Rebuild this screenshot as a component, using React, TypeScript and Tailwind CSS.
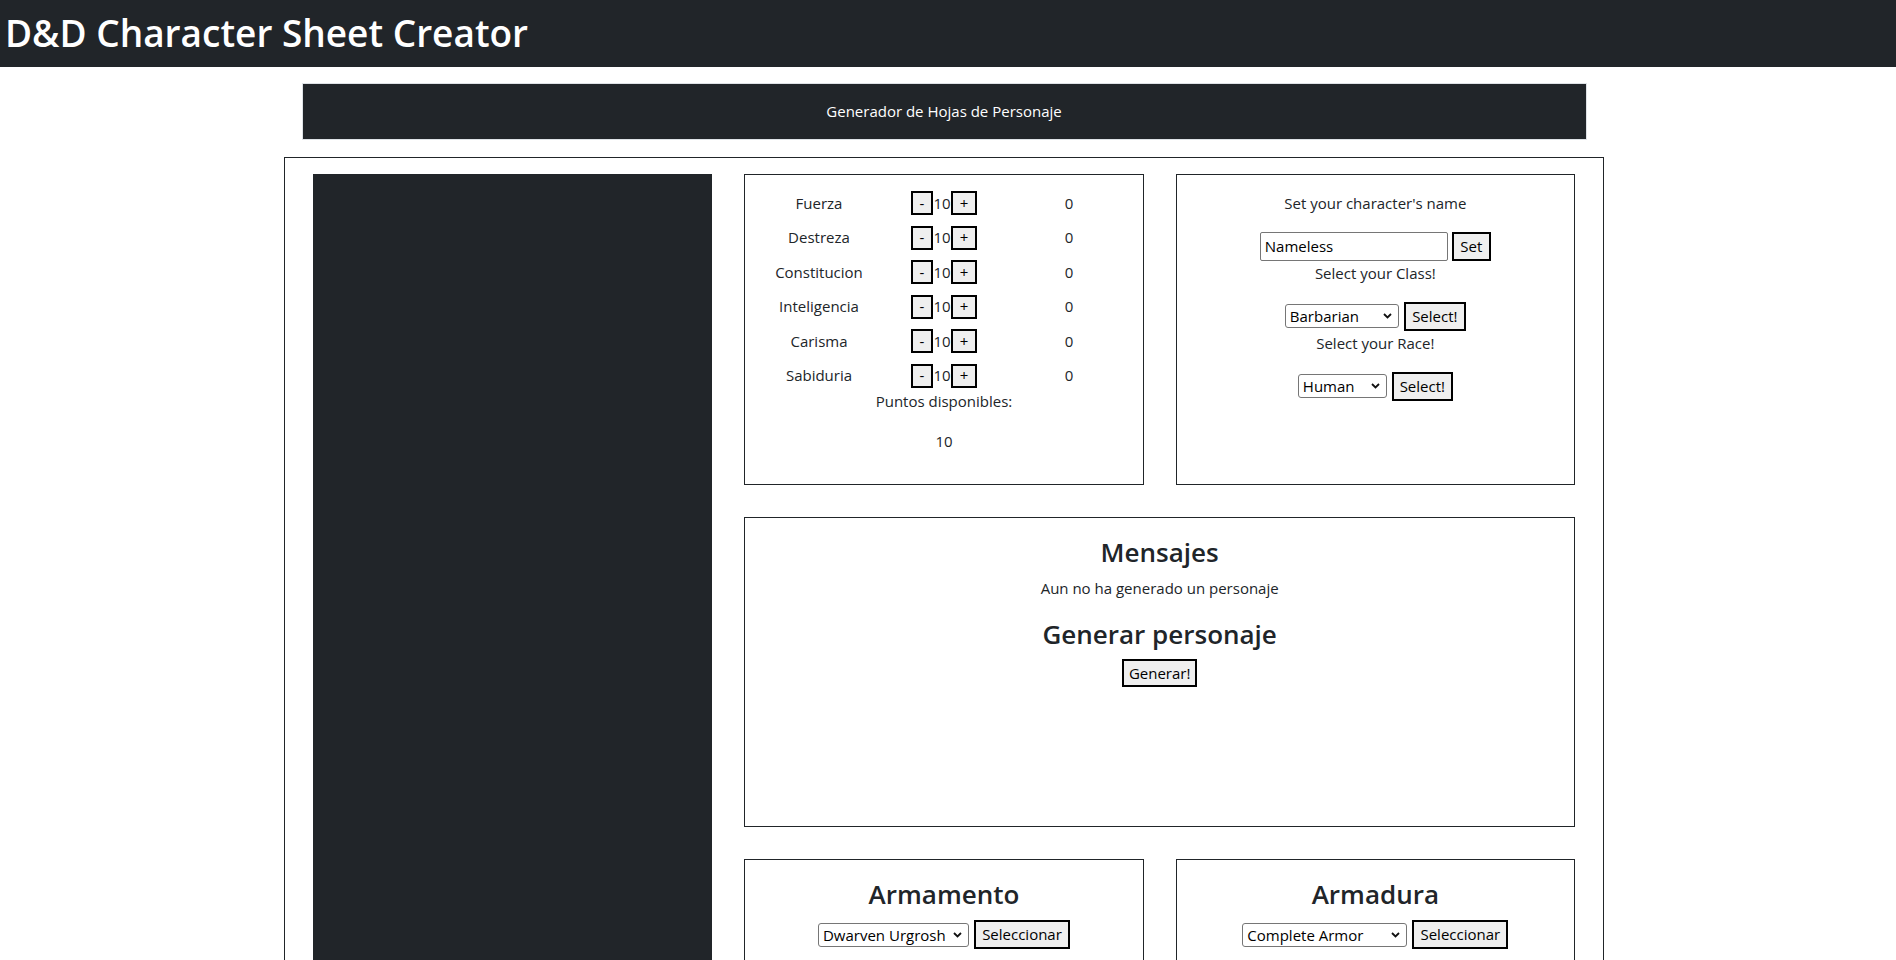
import React, { useState } from "react";

const stats = [
  "Fuerza",
  "Destreza",
  "Constitucion",
  "Inteligencia",
  "Carisma",
  "Sabiduria",
];

function Chevron() {
  return (
    <svg
      className="pointer-events-none absolute right-[7px] top-1/2 -translate-y-1/2"
      width="9"
      height="6"
      viewBox="0 0 9 6"
      fill="none"
    >
      <path d="M1 1l3.5 3.5L8 1" stroke="#111" strokeWidth="1.8" />
    </svg>
  );
}

function Select({ value, options, width }: { value: string; options: string[]; width: string }) {
  return (
    <div className={`relative h-[24px] ${width}`}>
      <select
        defaultValue={value}
        className="h-full w-full appearance-none rounded-[3px] border border-[#767676] bg-white pl-[4px] pr-5 text-[15px] leading-[22px] text-black"
      >
        {options.map((o) => (
          <option key={o}>{o}</option>
        ))}
      </select>
      <Chevron />
    </div>
  );
}

const btn =
  "border-2 border-black bg-[#efefef] text-black text-[15px] leading-none flex items-center justify-center";

function StatsBox() {
  const [values] = useState(stats.map(() => 10));
  return (
    <div className="border border-[#212529] pt-[13px] text-[15px]">
      <div className="mx-auto flex w-[375px] flex-col gap-[4.5px]">
        {stats.map((s, i) => (
          <div key={s} className="grid h-[30px] grid-cols-3 items-center text-center">
            <span>{s}</span>
            <div className="flex items-center justify-center">
              <button className={`${btn} h-[24px] w-[22px] text-[13px]`}>-</button>
              <span className="w-[18px] text-center">{values[i]}</span>
              <button className={`${btn} h-[24px] w-[26px] text-[13px]`}>+</button>
            </div>
            <span>0</span>
          </div>
        ))}
      </div>
      <p className="text-center leading-[20px]">Puntos disponibles:</p>
      <p className="mt-[20px] text-center leading-[20px]">10</p>
    </div>
  );
}

function NameBox() {
  return (
    <div className="flex flex-col items-center border border-[#212529] pt-4 text-[15px]">
      <p className="mb-4 leading-[24px]">Set your character's name</p>
      <div className="flex h-[30px] items-center gap-[4px]">
        <input
          defaultValue="Nameless"
          className="h-[29px] w-[188px] rounded-[2px] border border-[#767676] pl-[4px] text-[15px] text-black"
        />
        <button className={`${btn} h-[29px] w-[39px]`}>Set</button>
      </div>
      <p className="mb-4 leading-[24px]">Select your Class!</p>
      <div className="flex h-[30px] items-center gap-[5px]">
        <Select value="Barbarian" options={["Barbarian", "Bard", "Cleric", "Druid", "Fighter"]} width="w-[114px]" />
        <button className={`${btn} h-[29px] w-[62px]`}>Select!</button>
      </div>
      <p className="mb-4 leading-[24px]">Select your Race!</p>
      <div className="flex h-[30px] items-center gap-[5px]">
        <Select value="Human" options={["Human", "Elf", "Dwarf", "Halfling"]} width="w-[89px]" />
        <button className={`${btn} h-[29px] w-[61px]`}>Select!</button>
      </div>
    </div>
  );
}

function EquipBox({
  title,
  value,
  options,
  selectWidth,
}: {
  title: string;
  value: string;
  options: string[];
  selectWidth: string;
}) {
  return (
    <div className="flex flex-col items-center border border-[#212529] pt-[18px]">
      <h3 className="mb-2 text-[26px] font-semibold leading-[33.6px]">{title}</h3>
      <div className="flex h-[30px] items-center gap-[5px]">
        <Select value={value} options={options} width={selectWidth} />
        <button className={`${btn} h-[29px] w-[96px]`}>Seleccionar</button>
      </div>
    </div>
  );
}

export default function App() {
  return (
    <div className="min-h-screen bg-white font-['Open_Sans',sans-serif] text-[#212529]">
      <header className="flex h-[67px] items-center bg-[#212529] pl-[5px]">
        <h1 className="pb-[2px] text-[37px] font-semibold leading-none text-white">
          D&amp;D Character Sheet Creator
        </h1>
      </header>

      <div className="w-[1888px]">
        <div className="mx-auto mt-4 flex h-[57px] w-[1285px] items-center justify-center border border-[#dee2e6] bg-[#212529] text-[15px] text-white">
          Generador de Hojas de Personaje
        </div>

        <div className="mx-auto mt-[17px] grid w-[1320px] grid-cols-3 grid-rows-[311px_310px_310px] gap-8 border border-[#212529] px-[28px] pb-8 pt-4">
          {/* Left dark column */}
          <div className="row-span-3 bg-[#212529]" />

          <StatsBox />
          <NameBox />

          {/* Messages */}
          <div className="col-span-2 flex flex-col items-center border border-[#212529] pt-[18px] text-[15px]">
            <h3 className="mb-[6px] text-[26px] font-semibold leading-[33.6px]">Mensajes</h3>
            <p className="mb-[18px] leading-[24px]">Aun no ha generado un personaje</p>
            <h3 className="mb-2 text-[26px] font-semibold leading-[33.6px]">Generar personaje</h3>
            <button className={`${btn} h-[28px] w-[75px]`}>Generar!</button>
          </div>

          <EquipBox
            title="Armamento"
            value="Dwarven Urgrosh"
            options={["Dwarven Urgrosh", "Longsword", "Greataxe", "Dagger"]}
            selectWidth="w-[151px]"
          />
          <EquipBox
            title="Armadura"
            value="Complete Armor"
            options={["Complete Armor", "Leather Armor", "Chain Mail", "Plate"]}
            selectWidth="w-[165px]"
          />
        </div>
      </div>
    </div>
  );
}
